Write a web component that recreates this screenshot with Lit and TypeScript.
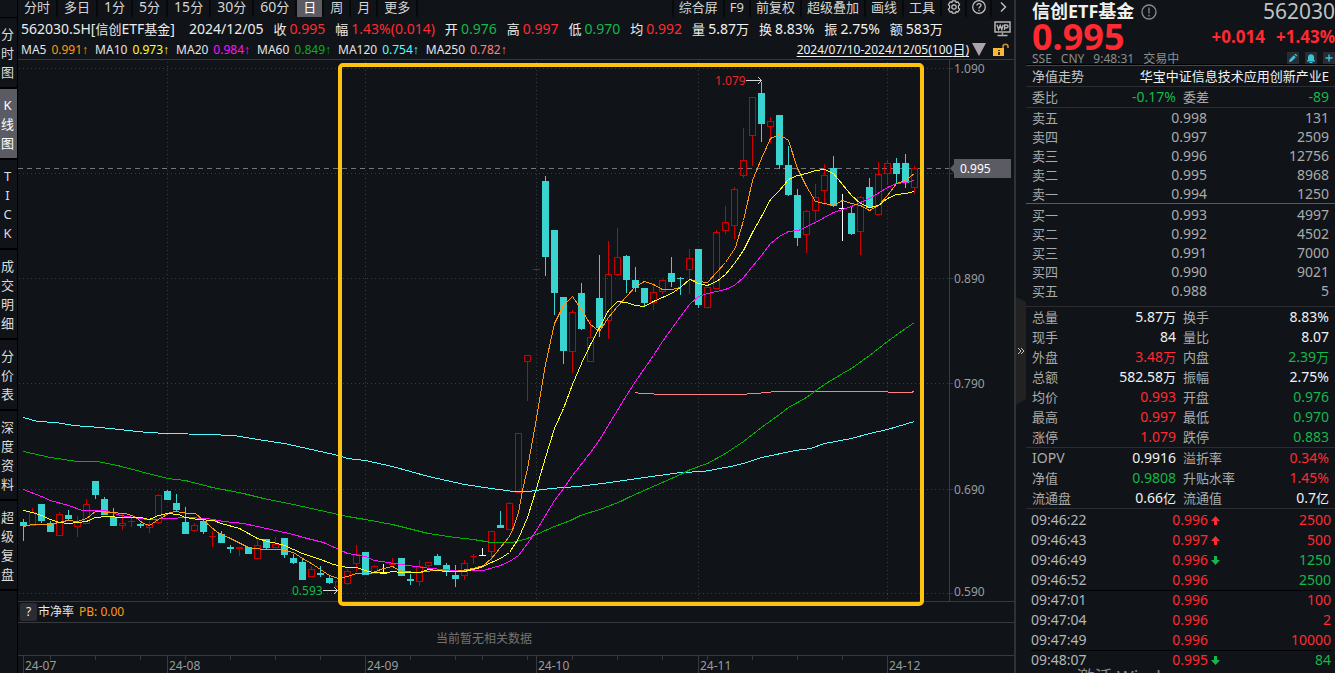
import { LitElement, html, svg, css } from "lit";
import { customElement, property } from "lit/decorators.js";

type Tone = "up" | "down" | "plain" | "dim";

const PERIODS = ["分时", "多日", "1分", "5分", "15分", "30分", "60分", "日", "周", "月", "更多"];
const TOOLS = ["综合屏", "F9", "前复权", "超级叠加", "画线", "工具"];
const VIEWS = ["分时图", "K线图", "TICK", "成交明细", "分价表", "深度资料", "超级复盘"];

const QUOTE: [string, string, Tone][] = [
  ["收", "0.995", "up"],
  ["幅", "1.43%(0.014)", "up"],
  ["开", "0.976", "down"],
  ["高", "0.997", "up"],
  ["低", "0.970", "down"],
  ["均", "0.992", "up"],
  ["量", "5.87万", "plain"],
  ["换", "8.83%", "plain"],
  ["振", "2.75%", "plain"],
  ["额", "583万", "plain"],
];

const AVERAGES: [string, string, string][] = [
  ["MA5", "0.991", "ma5"],
  ["MA10", "0.973", "ma10"],
  ["MA20", "0.984", "ma20"],
  ["MA60", "0.849", "ma60"],
  ["MA120", "0.754", "ma120"],
  ["MA250", "0.782", "ma250"],
];

const ASKS = [
  ["卖五", "0.998", "131"],
  ["卖四", "0.997", "2509"],
  ["卖三", "0.996", "12756"],
  ["卖二", "0.995", "8968"],
  ["卖一", "0.994", "1250"],
];
const BIDS = [
  ["买一", "0.993", "4997"],
  ["买二", "0.992", "4502"],
  ["买三", "0.991", "7000"],
  ["买四", "0.990", "9021"],
  ["买五", "0.988", "5"],
];

type Pair = [string, string, Tone, string, string, Tone];
const RATIO: Pair[] = [["委比", "-0.17%", "down", "委差", "-89", "down"]];
const STATS: Pair[] = [
  ["总量", "5.87万", "plain", "换手", "8.83%", "plain"],
  ["现手", "84", "plain", "量比", "8.07", "plain"],
  ["外盘", "3.48万", "up", "内盘", "2.39万", "down"],
  ["总额", "582.58万", "plain", "振幅", "2.75%", "plain"],
  ["均价", "0.993", "up", "开盘", "0.976", "down"],
  ["最高", "0.997", "up", "最低", "0.970", "down"],
  ["涨停", "1.079", "up", "跌停", "0.883", "down"],
];
const FUND: Pair[] = [
  ["IOPV", "0.9916", "plain", "溢折率", "0.34%", "up"],
  ["净值", "0.9808", "down", "升贴水率", "1.45%", "up"],
  ["流通盘", "0.66亿", "plain", "流通值", "0.7亿", "plain"],
];

/* time, price, direction arrow, volume, volume tone, rule above the row */
const TRADES: [string, string, string, string, Tone, boolean][] = [
  ["09:46:22", "0.996", "up", "2500", "up", false],
  ["09:46:43", "0.997", "up", "500", "up", false],
  ["09:46:49", "0.996", "down", "1250", "down", false],
  ["09:46:52", "0.996", "", "2500", "down", false],
  ["09:47:01", "0.996", "", "100", "up", true],
  ["09:47:04", "0.996", "", "2", "up", false],
  ["09:47:49", "0.996", "", "10000", "up", false],
  ["09:48:07", "0.995", "down", "84", "down", true],
];

/* One candle a day: kind (r rising, c falling, w unchanged), high, body top, body bottom, low */
const CANDLES = `c519,522,526,541 r508,512,526,526 c504,504,521,523 c521,523,532,532 r512,514,536,536
c510,515,519,520 r516,522,527,537 r499,504,524,524 c481,481,495,499 c497,499,515,515
c508,517,526,526 r514,523,526,530 r517,521,522,527 c523,524,526,528 r521,524,528,533
r494,495,523,524 c490,491,500,500 c494,503,510,511 c507,522,534,534 r523,525,531,532
c520,521,532,534 r531,536,537,547 c531,534,543,543 c545,547,549,553 r547,547,549,556
c547,547,554,554 r540,545,559,559 c539,539,548,550 r537,544,548,548 c538,538,555,558
c554,558,563,564 c558,562,580,580 r566,569,577,577 c566,573,575,577 c575,578,583,584
r581,581,587,592 r569,571,584,585 r545,554,564,572 c552,552,575,575 r565,566,574,574
w564,573,574,574 r558,563,565,565 c558,558,576,576 c574,579,581,585 r560,566,582,586
r562,562,566,570 c554,556,565,565 c563,565,572,576 c565,575,579,587 r560,563,576,580
r554,556,557,564 w548,555,556,556 r531,531,552,561 c511,525,528,528 r502,503,530,530
r433,433,493,493 r355,355,362,401 r269,269,270,270 c176,181,257,276 c230,230,293,315
c297,297,351,364 r310,312,352,373 c283,293,329,330 r320,337,362,362 c255,298,328,337
r241,274,321,339 r228,257,275,276 c255,256,280,293 c267,280,288,292 c288,288,303,306
r283,292,303,310 r279,280,292,294 c257,273,282,287 c277,278,279,295 r249,258,270,294
c249,249,305,308 r287,287,308,308 r230,232,289,289 r206,222,231,234 r187,189,226,239
r128,160,176,178 r97,97,136,166 c82,93,124,142 r117,121,127,143 c115,115,165,169
c146,165,195,196 c189,195,238,246 r210,211,235,253 r184,197,211,221 r164,175,191,205
c156,168,206,207 w194,208,209,241 c206,213,234,235 r196,197,232,255 c178,187,208,208
r162,174,215,215 r160,163,174,185 c158,163,174,184 c154,163,183,188 r166,168,188,194`
  .split(/\s+/)
  .map((s) => ({ kind: s[0], v: s.slice(1).split(",").map(Number) }));

const LINES: [string, string][] = [
  ["ma250", "635,392 640,393 667,394 738,394 756,393 776,391 864,391 910,392 914,391"],
  ["ma120", "23,417 37,421 55,422 73,425 100,427 147,432 167,433 208,434 233,435 257,439 284,443 311,449 338,455 347,458 365,460 392,466 428,476 464,484 491,488 513,491 528,491 550,488 577,486 602,483 630,479 680,472 703,471 730,466 743,463 761,457 795,450 810,448 824,443 851,438 869,433 887,429 914,421"],
  ["ma60", "23,451 50,457 77,461 97,461 117,465 140,471 167,478 185,480 212,487 243,493 263,498 293,504 320,510 347,516 365,519 392,524 428,533 455,537 473,539 491,542 512,542 527,538 536,534 554,526 570,520 580,515 602,508 620,501 630,496 680,474 690,469 707,463 725,453 743,441 761,427 779,414 788,407 806,397 824,384 842,373 851,368 869,355 887,341 905,328 914,322"],
  ["ma20", "23,489 41,496 50,500 68,505 82,510 105,510 120,515 147,519 170,518 185,517 207,518 223,521 243,523 257,526 275,530 293,534 303,537 323,542 343,551 347,553 365,556 374,560 401,564 430,568 455,570 473,570 483,570 500,565 509,561 518,555 527,543 536,530 545,515 554,500 563,488 572,475 590,452 600,438 612,418 626,395 635,381 653,355 662,341 680,316 689,304 698,296 707,293 716,291 725,289 734,285 743,277 761,255 770,243 779,236 788,231 798,230 815,222 824,217 833,212 851,206 860,202 869,198 887,187 896,183 905,182 914,180"],
  ["ma5", "23,526 32,524 47,524 59,522 67,520 77,521 86,518 95,511 110,512 125,513 134,516 143,523 149,525 158,519 170,512 176,511 187,513 195,513 203,520 217,532 230,538 248,547 263,549 277,549 284,550 293,552 302,558 311,563 320,569 329,575 338,578 347,576 356,573 370,573 383,568 392,566 401,571 419,572 433,570 455,571 473,568 483,565 491,558 500,547 509,536 513,527 518,512 522,490 527,468 532,440 536,418 545,364 554,323 563,305 572,296 581,309 590,324 599,331 608,317 617,306 626,296 635,286 644,281 653,284 662,289 671,289 680,287 689,279 698,281 707,282 716,272 725,262 735,247 740,230 743,220 752,180 761,158 770,138 779,134 788,140 797,168 806,186 815,201 824,203 833,205 842,200 851,203 860,205 869,210 878,205 887,195 896,183 905,180 914,173"],
  ["ma10", "23,510 32,512 41,515 50,519 59,522 68,523 86,521 95,517 107,516 122,517 140,517 149,519 158,515 167,513 178,514 185,517 197,519 213,520 221,523 239,528 257,538 267,541 277,543 284,545 302,553 320,559 333,564 347,567 356,567 365,570 372,572 387,572 392,571 401,572 419,572 428,569 446,571 464,571 480,567 491,562 500,558 509,552 518,538 527,517 536,488 545,457 554,428 563,408 572,384 581,363 590,344 599,327 608,310 617,301 626,302 635,305 644,306 653,301 662,297 671,293 680,287 689,279 698,283 707,285 716,281 725,274 734,263 743,250 752,232 761,216 770,199 779,190 788,179 797,175 806,173 815,170 824,169 833,173 842,184 851,195 860,203 869,207 878,205 887,198 896,194 905,193 914,191"],
];

const PRICE_GRID: [number, string, number][] = [
  [68, "1.090", 73],
  [173, "", 0],
  [278, "0.890", 283],
  [383, "0.790", 388],
  [489, "0.690", 494],
  [593, "0.590", 596],
];
const MONTHS: [number, string][] = [
  [23, "24-07"],
  [167, "24-08"],
  [365, "24-09"],
  [536, "24-10"],
  [698, "24-11"],
  [887, "24-12"],
];
const WEEKS = [50, 95, 140, 185, 230, 275, 320, 410, 455, 482, 527, 572, 617, 662, 707, 752, 797, 842];

/* Han characters are set one pixel smaller than the digits beside them. */
const mixed = (text: string) =>
  text
    .split(/([\u4e00-\u9fff]+)/)
    .filter(Boolean)
    .map((part) => (/[\u4e00-\u9fff]/.test(part) ? html`<span class="han">${part}</span>` : part));

const shared = css`
  :host {
    box-sizing: border-box;
  }
  *,
  *::before {
    box-sizing: border-box;
  }
  button {
    font: inherit;
    color: inherit;
    background: none;
    border: 0;
    margin: 0;
    padding: 0;
    cursor: pointer;
  }
  svg {
    display: block;
  }
  .han {
    font-size: 13px;
  }
  .up {
    color: #ff2a31;
  }
  .down {
    color: #14b74a;
  }
  .plain {
    color: #f2f2f2;
  }
  .dim {
    color: #a9abaa;
  }
`;

@customElement("view-tabs")
export class ViewTabs extends LitElement {
  static styles = [
    shared,
    css`
      :host {
        display: block;
        padding-top: 17px;
        border-right: 1px solid #000;
      }
      .tabs {
        display: flex;
        flex-direction: column;
        border-top: 1px solid #000;
      }
      .tab {
        display: flex;
        flex-direction: column;
        align-items: center;
        padding: 7px 2px 5px 0;
        border-bottom: 2px solid #000;
        font-size: 13px;
        line-height: 19px;
        color: #dcdcda;
      }
      .tab.on {
        background: #5b5b63;
        color: #fff;
      }
    `,
  ];

  render() {
    return html`<nav class="tabs" aria-label="视图">
      ${VIEWS.map(
        (v) => html`<button class="tab ${v === "K线图" ? "on" : ""}" aria-label=${v}>
          ${[...v].map((c) => html`<span>${c}</span>`)}
        </button>`
      )}
    </nav>`;
  }
}

@customElement("top-bar")
export class TopBar extends LitElement {
  static styles = [
    shared,
    css`
      :host {
        display: block;
      }
      .bar {
        display: flex;
        justify-content: space-between;
        height: 18px;
        padding-right: 1px;
        font-size: 14px;
        line-height: 14px;
        color: #d6d6d4;
      }
      .group {
        display: flex;
        height: 17px;
      }
      .item {
        padding: 0 6px 3px;
        border-right: 2px solid #08090b;
        white-space: nowrap;
      }
      .item.on {
        background: #5b5b63;
        color: #fff;
      }
      .tool {
        padding: 0 5px 3px;
        border-left: 2px solid #08090b;
        white-space: nowrap;
      }
      .tool.icon {
        padding: 0 4px 3px 5px;
      }
      .quote {
        display: flex;
        align-items: baseline;
        gap: 10px;
        height: 22px;
        padding: 0 3px;
        font-size: 14px;
        line-height: 22px;
        color: #ececec;
        white-space: nowrap;
      }
      .code {
        margin-right: 4px;
      }
      .pair {
        display: flex;
        align-items: baseline;
        gap: 3px;
      }
      .wp {
        align-self: center;
        margin-left: auto;
      }
      .averages {
        display: flex;
        align-items: baseline;
        gap: 7px;
        height: 20px;
        padding: 0 5px 0 3px;
        border-bottom: 1px solid #37393d;
        font-size: 12px;
        line-height: 19px;
        color: #e4e4e4;
        white-space: nowrap;
      }
      .average {
        display: flex;
        gap: 5px;
      }
      .arrow {
        font-family: "Liberation Sans", sans-serif;
      }
      .range {
        margin-left: auto;
        color: #f2f2f2;
        text-decoration: underline;
        text-underline-offset: 2px;
      }
      .icons {
        display: flex;
        align-items: center;
        align-self: center;
        gap: 7px;
        margin-left: -4px;
      }
      .ma5 {
        color: #ff9a10;
      }
      .ma10 {
        color: #ffff1e;
      }
      .ma20 {
        color: #ff10ff;
      }
      .ma60 {
        color: #10b010;
      }
      .ma120 {
        color: #50ffff;
      }
      .ma250 {
        color: #ff8080;
      }
    `,
  ];

  render() {
    return html`
      <nav class="bar" aria-label="周期与工具">
        <div class="group">
          ${PERIODS.map((p) => html`<button class="item ${p === "日" ? "on" : ""}">${mixed(p)}</button>`)}
        </div>
        <div class="group">
          ${TOOLS.map((t) => html`<button class="tool"><span class="han">${t}</span></button>`)}
          <button class="tool icon" aria-label="设置">
            <svg width="14" height="14" viewBox="0 0 14 14" fill="none" stroke="#c4c4c2" stroke-width="1.2">
              <path d="M5.4 .8h3.2l.5 1.600 1.800-.5 1.700 2.800L11.400 6v2l1.200 1.300-1.700 2.800-1.800-.5-.5 1.600H5.400l-.5-1.600-1.800.5-1.700-2.800L2.600 8V6L1.400 4.700l1.700-2.800 1.800.5z" />
              <circle cx="7" cy="7" r="2.200" />
            </svg>
          </button>
          <button class="tool icon" aria-label="帮助">
            <svg width="14" height="14" viewBox="0 0 14 14" fill="none" stroke="#c4c4c2" stroke-width="1.2">
              <circle cx="7" cy="7" r="6.3" />
              <path d="M5 5.500C5 2.900 9 3 9 5.400 9 6.900 7 6.800 7 8.500M7 9.800v1.400" />
            </svg>
          </button>
          <button class="tool icon" aria-label="展开">
            <svg width="12" height="14" viewBox="0 0 12 14" fill="none" stroke="#c4c4c2" stroke-width="1.4">
              <path d="M4 2.500 8.500 7 4 11.500" />
            </svg>
          </button>
        </div>
      </nav>
      <div class="quote">
        <span class="code">${mixed("562030.SH[信创ETF基金]")}</span>
        <span>2024/12/05</span>
        ${QUOTE.map(([k, v, t]) => html`<span class="pair"><span class="han">${k}</span><span class=${t}>${mixed(v)}</span></span>`)}
        <button class="wp" aria-label="WP">
          <svg width="17" height="16" viewBox="0 0 17 16" fill="none" stroke="#b4b4b2">
            <path d="M1 1h15v10H1z" stroke-width="1.5" />
            <path d="M3 3.800 4.600 8.500 6.200 4.500 7.800 8.500 9 3.800M10.500 9V4h2.200c1.800 0 1.800 2.800 0 2.800h-2" stroke-width="1.4" />
            <path d="M8.500 12v1.500M3.500 14.500h10" stroke-width="1.5" />
          </svg>
        </button>
      </div>
      <div class="averages">
        ${AVERAGES.map(
          ([k, v, c]) => html`<span class="average"><span>${k}</span><span class=${c}>${v}<span class="arrow">↑</span></span></span>`
        )}
        <a class="range" href="#range">2024/07/10-2024/12/05(100${mixed("日")})</a>
        <span class="icons">
          <svg width="14" height="13" viewBox="0 0 14 13"><path d="M0 0h14L7 13z" fill="#a9a5a8" /></svg>
          <svg width="16" height="14" viewBox="0 0 16 14">
            <path d="M0 5h11v8H0z" fill="#fbb832" />
            <path d="M5 7h2v1H5zM5 9h2v3H5z" fill="#3a2a08" />
            <path d="M10 5V3.500C10 .4 15 .4 15 3.500V5" fill="none" stroke="#c98f22" stroke-width="1.6" />
          </svg>
        </span>
      </div>
    `;
  }
}

@customElement("price-chart")
export class PriceChart extends LitElement {
  static styles = [
    shared,
    css`
      :host {
        display: flex;
        flex-direction: column;
        flex: 1;
        min-height: 0;
      }
      .plot {
        position: relative;
        z-index: 1;
        flex: 1;
        min-height: 0;
        width: 100%;
        overflow: visible;
      }
      .crisp {
        shape-rendering: crispEdges;
      }
      .grid {
        stroke: #393c41;
        stroke-dasharray: 1 3;
      }
      .rule {
        stroke: #37393d;
      }
      .label {
        fill: #9b9d9c;
        font-size: 12px;
      }
      .last {
        stroke: #74767a;
        stroke-dasharray: 5 4;
      }
      .tag {
        fill: #5b5b63;
      }
      .tagtext {
        fill: #fff;
        font-size: 12px;
      }
      .high {
        fill: #e8262c;
        font-size: 12px;
      }
      .low {
        fill: #14b74a;
        font-size: 12px;
      }
      .pointer {
        fill: none;
        stroke: #d8d8d8;
      }
      .frame {
        fill: none;
        stroke: #ffc20e;
        stroke-width: 4;
      }
      .r {
        stroke: #cc0000;
        fill: none;
      }
      .c {
        stroke: #3ad4d0;
        fill: #3ad4d0;
      }
      .w {
        stroke: #fff;
        fill: #fff;
      }
      .solid {
        stroke: none;
      }
      .ma {
        fill: none;
        stroke-width: 1;
      }
      .ma5 {
        stroke: #ff9a10;
      }
      .ma10 {
        stroke: #ffff1e;
      }
      .ma20 {
        stroke: #ff10ff;
      }
      .ma60 {
        stroke: #00b400;
      }
      .ma120 {
        stroke: #50ffff;
      }
      .ma250 {
        stroke: #ff8080;
      }
      .indicator {
        display: flex;
        align-items: center;
        height: 22px;
        padding-left: 2px;
        border-top: 1px solid #37393d;
        border-bottom: 1px solid #37393d;
        font-size: 12px;
        line-height: 18px;
        color: #e8e8e8;
      }
      .help {
        width: 17px;
        height: 18px;
        margin-right: 1px;
        background: #2b2b34;
        border-radius: 2px;
      }
      .pb {
        margin-left: 5px;
        color: #ff9a10;
      }
      .empty {
        height: 32px;
        padding-right: 64px;
        font-size: 12px;
        line-height: 31px;
        text-align: center;
        color: #74756f;
      }
      .axis {
        width: 100%;
      }
    `,
  ];

  private candle(kind: string, [high, top, bottom, low]: number[], i: number) {
    const x = 23 + i * 9;
    const flat = bottom - top <= 1;
    const body = flat
      ? svg`<path d="M${x - 3} ${top + 0.5}h7" />`
      : kind === "r"
        ? svg`<rect x=${x - 2.5} y=${top + 0.5} width="6" height=${bottom - top - 1} />`
        : svg`<rect class="solid" x=${x - 3} y=${top} width="7" height=${bottom - top} />`;
    return svg`<g class=${kind}>
      ${high < top ? svg`<path d="M${x + 0.5} ${high}V${top}" />` : ""}
      ${body}
      ${low > bottom ? svg`<path d="M${x + 0.5} ${bottom}V${low}" />` : ""}
    </g>`;
  }

  render() {
    return html`
      <svg class="plot" viewBox="18 60 996 541" preserveAspectRatio="xMinYMin meet" role="img" aria-label="日K线">
        <g class="crisp">
          ${PRICE_GRID.map(([y]) => svg`<path class="grid" d="M19 ${y + 0.5}H949" /><path class="rule" d="M949 ${y + 0.5}h4" />`)}
          ${MONTHS.slice(1).map(([x]) => svg`<path class="grid" d="M${x + 0.5} 62V601" />`)}
          <path class="rule" d="M949.5 60V601" />
          <path class="last" d="M18 168.5H949" />
          ${CANDLES.map((c, i) => this.candle(c.kind, c.v, i))}
          <g transform="translate(.5 .5)">
            ${LINES.map(([name, points]) => svg`<polyline class="ma ${name}" points=${points} />`)}
          </g>
        </g>
        ${PRICE_GRID.filter(([, t]) => t).map(([, t, y]) => svg`<text class="label" x="954" y=${y}>${t}</text>`)}
        <path class="tag" d="M950 168.5 954 164V159H1011V178H954V173z" />
        <text class="tagtext" x="960" y="173">0.995</text>
        <text class="high" x="715" y="85">1.079</text>
        <path class="pointer" d="M746 80.5H761.5M758 77l3.5 3.5L758 84" />
        <text class="low" x="292" y="595">0.593</text>
        <path class="pointer" d="M323 590.5H337.5M334 587l3.5 3.5L334 594" />
        <rect class="frame" x="340" y="65" width="582" height="539" rx="3" />
      </svg>
      <div class="indicator">
        <button class="help" aria-label="指标说明">?</button>
        <span>市净率</span><span class="pb">PB: 0.00</span>
      </div>
      <div class="empty">当前暂无相关数据</div>
      <svg class="axis" viewBox="18 655 996 18" preserveAspectRatio="xMinYMin meet" role="img" aria-label="日期">
        <g class="crisp">
          <path class="rule" d="M18 655.5H1014" />
          ${MONTHS.map(([x]) => svg`<path class="rule" d="M${x + 0.5} 656V673" />`)}
          ${WEEKS.map((x) => svg`<path class="rule" d="M${x + 0.5} 656v4" />`)}
        </g>
        ${MONTHS.map(([x, t]) => svg`<text class="label" x=${x + 2} y="670">${t}</text>`)}
      </svg>
    `;
  }
}

@customElement("pair-table")
export class PairTable extends LitElement {
  @property({ attribute: false }) rows: Pair[] = [];
  static styles = [
    shared,
    css`
      :host {
        display: block;
        padding: 0 6px;
      }
      table {
        width: 100%;
        table-layout: fixed;
        border-collapse: collapse;
        font-size: 14px;
        line-height: 18px;
      }
      th,
      td {
        height: 20px;
        padding: 0;
        font-weight: 400;
        white-space: nowrap;
      }
      th {
        width: 60px;
        text-align: left;
        color: #a9abaa;
      }
      td {
        width: 84px;
        text-align: right;
      }
      td + th {
        width: 72px;
        padding-left: 7px;
      }
      td:last-child {
        width: auto;
      }
    `,
  ];

  render() {
    return html`<table>
      ${this.rows.map(
        ([a, av, at, b, bv, bt]) => html`<tr>
          <th scope="row">${mixed(a)}</th>
          <td class=${at}>${mixed(av)}</td>
          <th scope="row">${mixed(b)}</th>
          <td class=${bt}>${mixed(bv)}</td>
        </tr>`
      )}
    </table>`;
  }
}

@customElement("quote-panel")
export class QuotePanel extends LitElement {
  static styles = [
    shared,
    css`
      :host {
        display: flex;
        border-left: 2px solid #303236;
        overflow: hidden;
      }
      .fold {
        display: flex;
        align-items: center;
        width: 10px;
        padding-top: 28px;
        flex: none;
      }
      .content {
        flex: 1;
        min-width: 0;
      }
      .head {
        display: grid;
        grid-template-columns: 1fr auto;
        padding-left: 6px;
        border-bottom: 1px solid #000;
      }
      .title {
        display: flex;
        align-items: center;
        gap: 7px;
        height: 23px;
        font-size: 18px;
        line-height: 23px;
        font-weight: 700;
        color: #f0f0ee;
      }
      .code {
        height: 23px;
        font-size: 21px;
        line-height: 23px;
        text-align: right;
        color: #bfc1c2;
      }
      .last {
        height: 29px;
        font-size: 36px;
        line-height: 28px;
        font-weight: 700;
      }
      .change {
        display: flex;
        gap: 11px;
        height: 29px;
        font-size: 17px;
        line-height: 27px;
        font-weight: 700;
      }
      .session {
        display: flex;
        gap: 9px;
        height: 12px;
        font-size: 12px;
        line-height: 13px;
        color: #8b8d8c;
      }
      .actions {
        display: flex;
        justify-content: flex-end;
        gap: 6px;
      }
      .action {
        display: grid;
        place-items: center;
        width: 12px;
        height: 12px;
        background: #2a2c33;
      }
      .trend {
        display: flex;
        justify-content: space-between;
        height: 22px;
        padding: 0 6px;
        border-top: 1px solid #44464a;
        border-bottom: 1px solid #2b2d31;
        font-size: 13px;
        line-height: 21px;
        color: #c4c5c4;
        white-space: nowrap;
      }
      .ratio {
        border-bottom: 1px solid #2b2d31;
      }
      .book {
        width: 100%;
        table-layout: fixed;
        border-collapse: collapse;
        font-size: 14px;
        line-height: 17px;
        color: #a9abaa;
      }
      .side {
        padding: 0 6px;
      }
      .asks {
        border-bottom: 1px solid #57595d;
      }
      .bids {
        padding-top: 1px;
        padding-bottom: 6px;
        border-bottom: 1px solid #2b2d31;
      }
      .book th,
      .book td {
        height: 19px;
        padding: 0;
        font-weight: 400;
        text-align: right;
      }
      .book th {
        width: 60px;
        text-align: left;
      }
      .book .price {
        width: 115px;
      }
      .stats {
        border-bottom: 1px solid #2b2d31;
      }
      .trades {
        padding: 1px 4px 0 5px;
      }
      .tape {
        width: 100%;
        table-layout: fixed;
        border-collapse: collapse;
        font-size: 14px;
        line-height: 18px;
      }
      .tape td {
        height: 20px;
        padding: 0;
        text-align: right;
      }
      .tape .time {
        width: 90px;
        text-align: left;
        color: #b4b6b5;
      }
      .tape .price {
        width: 87px;
      }
      .tape .dir {
        width: 20px;
        padding-left: 3px;
      }
      .tape .ruled td {
        border-top: 1px solid #000;
      }
    `,
  ];

  private side(rows: string[][]) {
    return html`<table class="book">
      ${rows.map(
        ([k, p, q]) => html`<tr>
          <th scope="row"><span class="han">${k}</span></th>
          <td class="price">${p}</td>
          <td>${q}</td>
        </tr>`
      )}
    </table>`;
  }

  private arrow(dir: string) {
    if (!dir) return "";
    return dir === "up"
      ? html`<svg width="9" height="9" viewBox="0 0 9 9"><path d="M4.500 0 9 5H6v4H3V5H0z" fill="#ff2a31" /></svg>`
      : html`<svg width="9" height="9" viewBox="0 0 9 9"><path d="M4.500 9 9 4H6V0H3v4H0z" fill="#14b74a" /></svg>`;
  }

  render() {
    return html`
      <button class="fold" aria-label="收起">
        <svg width="10" height="108" viewBox="0 0 10 108">
          <path d="M0 0 10 5V102L0 108z" fill="#222222" />
          <path d="M2 51l3 3-3 3M5 51l3 3-3 3" fill="none" stroke="#c0c0be" />
        </svg>
      </button>
      <div class="content">
        <header class="head">
          <div class="title">
            信创ETF基金
            <svg width="16" height="16" viewBox="0 0 16 16" fill="none" stroke="#8b8d8c" stroke-width="1.3">
              <circle cx="8" cy="8" r="7" />
              <path d="M8 3.500v6M8 10.800v1.600" />
            </svg>
          </div>
          <div class="code">562030</div>
          <div class="last up">0.995</div>
          <div class="change up"><span>+0.014</span><span>+1.43%</span></div>
          <div class="session"><span>SSE</span><span>CNY</span><span>9:48:31</span><span>交易中</span></div>
          <div class="actions">
            <button class="action" aria-label="编辑">
              <svg width="10" height="10" viewBox="0 0 10 10"><path d="M1 9l.6-2.600L5.800 2.200 7.800 4.200 3.600 8.400zM6.400 1.600 7.400.7 9.300 2.600 8.400 3.600z" fill="#3ac4d8" /></svg>
            </button>
            <button class="action" aria-label="提醒">
              <svg width="10" height="10" viewBox="0 0 10 10"><path d="M1 8.500V7.600L2 7V4C2 .2 8 .2 8 4v3l1 .6v.9zM3.500 9h3v1h-3z" fill="#3ac4d8" /></svg>
            </button>
            <button class="action" aria-label="添加">
              <svg width="10" height="10" viewBox="0 0 10 10"><path d="M4.300 1.500h1.400v2.800h2.800v1.400H5.700v2.800H4.300V5.700H1.500V4.300h2.800z" fill="#3ac4d8" /></svg>
            </button>
          </div>
        </header>
        <div class="trend"><span>净值走势</span><span class="plain">华宝中证信息技术应用创新产业E</span></div>
        <div class="ratio"><pair-table .rows=${RATIO}></pair-table></div>
        <div class="side asks">${this.side(ASKS)}</div>
        <div class="side bids">${this.side(BIDS)}</div>
        <div class="stats"><pair-table .rows=${STATS}></pair-table></div>
        <div class="stats"><pair-table .rows=${FUND}></pair-table></div>
        <div class="trades">
          <table class="tape">
            ${TRADES.map(
              ([t, p, d, q, tone, ruled]) => html`<tr class=${ruled ? "ruled" : ""}>
                <td class="time">${t}</td>
                <td class="price up">${p}</td>
                <td class="dir">${this.arrow(d)}</td>
                <td class=${tone}>${q}</td>
              </tr>`
            )}
          </table>
        </div>
      </div>
    `;
  }
}

@customElement("app-root")
export class AppRoot extends LitElement {
  static styles = [
    shared,
    css`
      :host {
        position: relative;
        display: grid;
        grid-template-columns: 18px minmax(0, 1fr) 321px;
        height: 100vh;
        overflow: hidden;
        background: #101318;
        font-family: "Noto Sans", "Noto Sans CJK SC", sans-serif;
      }
      .main {
        display: flex;
        flex-direction: column;
        min-height: 0;
      }
      .notice {
        position: absolute;
        right: 141px;
        bottom: -18px;
        font-size: 18px;
        line-height: 28px;
        color: #8a8c8c;
        pointer-events: none;
      }
    `,
  ];

  render() {
    return html`
      <view-tabs></view-tabs>
      <main class="main">
        <top-bar></top-bar>
        <price-chart></price-chart>
      </main>
      <quote-panel></quote-panel>
      <div class="notice">激活 Windows</div>
    `;
  }
}
